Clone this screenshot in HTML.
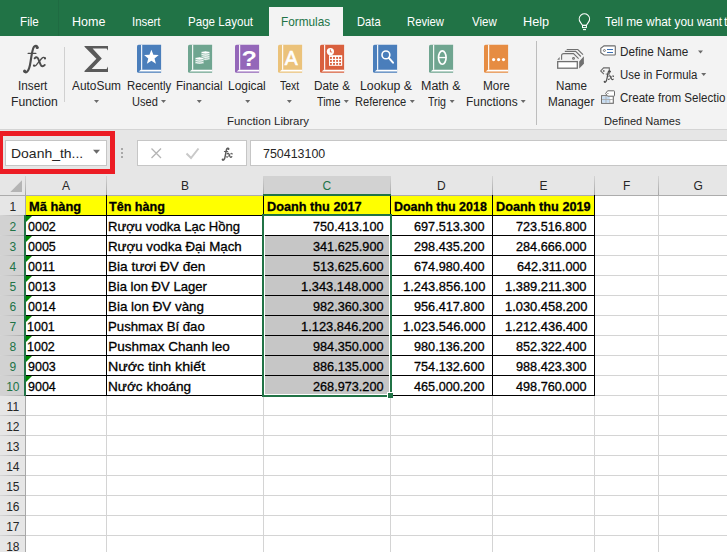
<!DOCTYPE html>
<html><head><meta charset="utf-8">
<style>
html,body{margin:0;padding:0;width:727px;height:552px;overflow:hidden;background:#fff}
body{position:relative;font-family:"Liberation Sans",sans-serif}
.a{position:absolute}
.t{position:absolute;white-space:nowrap;line-height:1;transform-origin:0 0;font-family:"Liberation Sans",sans-serif}
svg{position:absolute;left:0;top:0;overflow:visible}
</style></head><body>
<!-- tab bar -->
<div class="a" style="left:0;top:0;width:727px;height:36px;background:#217346"></div>
<div class="a" style="left:58px;top:0;width:1px;height:36px;background:#1f6b42"></div>
<div class="a" style="left:269px;top:7px;width:74px;height:29px;background:#f3f3f3"></div>
<!-- ribbon -->
<div class="a" style="left:0;top:36px;width:727px;height:93px;background:#f3f3f3"></div>
<div class="a" style="left:0;top:129px;width:727px;height:1px;background:#d4d4d4"></div>
<div class="a" style="left:64px;top:47px;width:1px;height:55px;background:#d0d0d0"></div>
<div class="a" style="left:536px;top:41px;width:1px;height:84px;background:#bdbdbd"></div>
<!-- formula bar area -->
<div class="a" style="left:0;top:130px;width:727px;height:46px;background:#e6e6e6"></div>
<div class="a" style="left:5px;top:140px;width:100px;height:24px;background:#fff;border:1px solid #c6c6c6"></div>
<div class="a" style="left:137px;top:140px;width:108px;height:24px;background:#fff;border:1px solid #c6c6c6"></div>
<div class="a" style="left:250px;top:140px;width:500px;height:24px;background:#fff;border:1px solid #c6c6c6"></div>
<!-- red highlight box -->
<div class="a" style="left:-2px;top:131px;width:107px;height:33px;border:5px solid #ec1c24"></div>
<!-- column header row -->
<div class="a" style="left:0;top:176px;width:727px;height:19px;background:#e6e6e6"></div>
<div class="a" style="left:264px;top:176px;width:126px;height:18px;background:#d2d2d2"></div>
<div class="a" style="left:0;top:195px;width:727px;height:1px;background:#acacac"></div>
<div class="a" style="left:263px;top:194px;width:128px;height:2px;background:#217346"></div>
<!-- row headers -->
<div class="a" style="left:0;top:196px;width:25px;height:356px;background:#e6e6e6"></div>
<div class="a" style="left:0;top:216px;width:24px;height:179px;background:#d2d2d2"></div>
<div class="a" style="left:106px;top:196px;width:1px;height:356px;background:#d4d4d4"></div>
<div class="a" style="left:263px;top:196px;width:1px;height:356px;background:#d4d4d4"></div>
<div class="a" style="left:390px;top:196px;width:1px;height:356px;background:#d4d4d4"></div>
<div class="a" style="left:492px;top:196px;width:1px;height:356px;background:#d4d4d4"></div>
<div class="a" style="left:594px;top:196px;width:1px;height:356px;background:#d4d4d4"></div>
<div class="a" style="left:658px;top:196px;width:1px;height:356px;background:#d4d4d4"></div>
<div class="a" style="left:26px;top:215px;width:701px;height:1px;background:#d4d4d4"></div>
<div class="a" style="left:26px;top:235px;width:701px;height:1px;background:#d4d4d4"></div>
<div class="a" style="left:26px;top:255px;width:701px;height:1px;background:#d4d4d4"></div>
<div class="a" style="left:26px;top:275px;width:701px;height:1px;background:#d4d4d4"></div>
<div class="a" style="left:26px;top:295px;width:701px;height:1px;background:#d4d4d4"></div>
<div class="a" style="left:26px;top:315px;width:701px;height:1px;background:#d4d4d4"></div>
<div class="a" style="left:26px;top:335px;width:701px;height:1px;background:#d4d4d4"></div>
<div class="a" style="left:26px;top:355px;width:701px;height:1px;background:#d4d4d4"></div>
<div class="a" style="left:26px;top:375px;width:701px;height:1px;background:#d4d4d4"></div>
<div class="a" style="left:26px;top:395px;width:701px;height:1px;background:#d4d4d4"></div>
<div class="a" style="left:26px;top:415px;width:701px;height:1px;background:#d4d4d4"></div>
<div class="a" style="left:26px;top:435px;width:701px;height:1px;background:#d4d4d4"></div>
<div class="a" style="left:26px;top:455px;width:701px;height:1px;background:#d4d4d4"></div>
<div class="a" style="left:26px;top:475px;width:701px;height:1px;background:#d4d4d4"></div>
<div class="a" style="left:26px;top:495px;width:701px;height:1px;background:#d4d4d4"></div>
<div class="a" style="left:26px;top:515px;width:701px;height:1px;background:#d4d4d4"></div>
<div class="a" style="left:26px;top:535px;width:701px;height:1px;background:#d4d4d4"></div>
<div class="a" style="left:25px;top:176px;width:1px;height:19px;background:linear-gradient(#d4d4d4,#a6a6a6)"></div>
<div class="a" style="left:106px;top:176px;width:1px;height:19px;background:linear-gradient(#d4d4d4,#a6a6a6)"></div>
<div class="a" style="left:263px;top:176px;width:1px;height:19px;background:linear-gradient(#d4d4d4,#a6a6a6)"></div>
<div class="a" style="left:390px;top:176px;width:1px;height:19px;background:linear-gradient(#d4d4d4,#a6a6a6)"></div>
<div class="a" style="left:492px;top:176px;width:1px;height:19px;background:linear-gradient(#d4d4d4,#a6a6a6)"></div>
<div class="a" style="left:594px;top:176px;width:1px;height:19px;background:linear-gradient(#d4d4d4,#a6a6a6)"></div>
<div class="a" style="left:658px;top:176px;width:1px;height:19px;background:linear-gradient(#d4d4d4,#a6a6a6)"></div>
<div class="a" style="left:0px;top:215px;width:25px;height:1px;background:linear-gradient(to right,#d6d6d6,#a8a8a8)"></div>
<div class="a" style="left:0px;top:235px;width:25px;height:1px;background:linear-gradient(to right,#d6d6d6,#a8a8a8)"></div>
<div class="a" style="left:0px;top:255px;width:25px;height:1px;background:linear-gradient(to right,#d6d6d6,#a8a8a8)"></div>
<div class="a" style="left:0px;top:275px;width:25px;height:1px;background:linear-gradient(to right,#d6d6d6,#a8a8a8)"></div>
<div class="a" style="left:0px;top:295px;width:25px;height:1px;background:linear-gradient(to right,#d6d6d6,#a8a8a8)"></div>
<div class="a" style="left:0px;top:315px;width:25px;height:1px;background:linear-gradient(to right,#d6d6d6,#a8a8a8)"></div>
<div class="a" style="left:0px;top:335px;width:25px;height:1px;background:linear-gradient(to right,#d6d6d6,#a8a8a8)"></div>
<div class="a" style="left:0px;top:355px;width:25px;height:1px;background:linear-gradient(to right,#d6d6d6,#a8a8a8)"></div>
<div class="a" style="left:0px;top:375px;width:25px;height:1px;background:linear-gradient(to right,#d6d6d6,#a8a8a8)"></div>
<div class="a" style="left:0px;top:395px;width:25px;height:1px;background:linear-gradient(to right,#d6d6d6,#a8a8a8)"></div>
<div class="a" style="left:0px;top:415px;width:25px;height:1px;background:linear-gradient(to right,#d6d6d6,#a8a8a8)"></div>
<div class="a" style="left:0px;top:435px;width:25px;height:1px;background:linear-gradient(to right,#d6d6d6,#a8a8a8)"></div>
<div class="a" style="left:0px;top:455px;width:25px;height:1px;background:linear-gradient(to right,#d6d6d6,#a8a8a8)"></div>
<div class="a" style="left:0px;top:475px;width:25px;height:1px;background:linear-gradient(to right,#d6d6d6,#a8a8a8)"></div>
<div class="a" style="left:0px;top:495px;width:25px;height:1px;background:linear-gradient(to right,#d6d6d6,#a8a8a8)"></div>
<div class="a" style="left:0px;top:515px;width:25px;height:1px;background:linear-gradient(to right,#d6d6d6,#a8a8a8)"></div>
<div class="a" style="left:0px;top:535px;width:25px;height:1px;background:linear-gradient(to right,#d6d6d6,#a8a8a8)"></div>
<div class="a" style="left:25px;top:196px;width:1px;height:356px;background:#a8a8a8"></div>
<div class="a" style="left:26px;top:196px;width:568px;height:19px;background:#ffff00"></div>
<div class="a" style="left:265px;top:236px;width:124px;height:158px;background:#c6c6c6"></div>
<div class="a" style="left:106px;top:195px;width:1px;height:201px;background:#000"></div>
<div class="a" style="left:263px;top:195px;width:1px;height:201px;background:#000"></div>
<div class="a" style="left:390px;top:195px;width:1px;height:201px;background:#000"></div>
<div class="a" style="left:492px;top:195px;width:1px;height:201px;background:#000"></div>
<div class="a" style="left:594px;top:195px;width:1px;height:201px;background:#000"></div>
<div class="a" style="left:25px;top:215px;width:570px;height:1px;background:#000"></div>
<div class="a" style="left:25px;top:235px;width:570px;height:1px;background:#000"></div>
<div class="a" style="left:25px;top:255px;width:570px;height:1px;background:#000"></div>
<div class="a" style="left:25px;top:275px;width:570px;height:1px;background:#000"></div>
<div class="a" style="left:25px;top:295px;width:570px;height:1px;background:#000"></div>
<div class="a" style="left:25px;top:315px;width:570px;height:1px;background:#000"></div>
<div class="a" style="left:25px;top:335px;width:570px;height:1px;background:#000"></div>
<div class="a" style="left:25px;top:355px;width:570px;height:1px;background:#000"></div>
<div class="a" style="left:25px;top:375px;width:570px;height:1px;background:#000"></div>
<div class="a" style="left:25px;top:395px;width:570px;height:1px;background:#000"></div>
<div class="a" style="left:264px;top:216px;width:1px;height:179px;background:#fff"></div>
<div class="a" style="left:389px;top:216px;width:1px;height:179px;background:#fff"></div>
<div class="a" style="left:264px;top:394px;width:126px;height:1px;background:#fff"></div>
<div class="a" style="left:262px;top:214px;width:130px;height:2px;background:#217346"></div>
<div class="a" style="left:262px;top:395px;width:125px;height:2px;background:#217346"></div>
<div class="a" style="left:262px;top:214px;width:2px;height:183px;background:#217346"></div>
<div class="a" style="left:390px;top:214px;width:2px;height:178px;background:#217346"></div>
<div class="a" style="left:387px;top:392px;width:6px;height:6px;background:#fff"></div>
<div class="a" style="left:388px;top:393px;width:5px;height:5px;background:#217346"></div>
<div class="a" style="left:24px;top:215px;width:2px;height:181px;background:#217346"></div>
<div class="a" style="left:263px;top:194px;width:128px;height:2px;background:#217346"></div>
<svg width="727" height="552"><path d="M26 216H32L26 222Z" fill="#008a00"/><path d="M26 236H32L26 242Z" fill="#008a00"/><path d="M26 256H32L26 262Z" fill="#008a00"/><path d="M26 276H32L26 282Z" fill="#008a00"/><path d="M26 296H32L26 302Z" fill="#008a00"/><path d="M26 316H32L26 322Z" fill="#008a00"/><path d="M26 336H32L26 342Z" fill="#008a00"/><path d="M26 356H32L26 362Z" fill="#008a00"/><path d="M26 376H32L26 382Z" fill="#008a00"/><path d="M10.3 192H22V180.2Z" fill="#b4b4b4"/></svg>
<svg width="727" height="552" viewBox="0 0 727 552">
<g transform="translate(0,0) scale(1)"><g fill="none" stroke="#4d4d4d" stroke-linecap="round"><path d="M37.6 47.6C37.2 45.6 35.1 45.2 33.9 46.9C32.6 48.7 31.4 56 30.6 61.5C29.8 67 28.8 70.6 26.9 71.9C25.9 72.6 24.6 72.4 24.3 71.5" stroke-width="2.1"/><path d="M28.2 53.4H35.8" stroke-width="1.4"/><path d="M34.6 58.3C36.3 56.3 37.8 57.2 38.6 59.6L40.6 64.6C41.5 66.8 43.2 66.8 44.8 64.9" stroke-width="1.9"/><path d="M45.3 58.3C44 56.7 42.7 57.2 41.2 59L36.6 64.7C35.6 66 34.5 66.3 33.9 65.5" stroke-width="1.3"/></g><circle cx="37.1" cy="47.6" r="1.5" fill="#4d4d4d"/><circle cx="24.6" cy="71.1" r="1.5" fill="#4d4d4d"/><circle cx="45" cy="58.4" r="1.1" fill="#4d4d4d"/><circle cx="34" cy="65.6" r="1.1" fill="#4d4d4d"/></g>
<path d="M84.5 46H108V50.5L106.6 48.6H92.6L101.8 58.6L91.7 68.9H106.6L108 66.6V72H84.5V70.9L96.4 58.8L84.5 46.7Z" fill="#5a5a5a"/>
<g transform="translate(137,44.8)"><path d="M1.6 0H24.1V28H1.6Q0 28 0 26.4V1.6Q0 0 1.6 0Z" fill="#4a7ebb"/><rect x="4.1" y="0" width="1.1" height="25" fill="#fff"/><path d="M3.8 24.9H24.1V26.8H1.7Z" fill="#fff"/><polygon points="14.40,4.90 16.34,9.93 21.72,10.22 17.54,13.62 18.93,18.83 14.40,15.90 9.87,18.83 11.26,13.62 7.08,10.22 12.46,9.93" fill="#fff"/></g>
<g transform="translate(188,44.8)"><path d="M1.6 0H24.1V28H1.6Q0 28 0 26.4V1.6Q0 0 1.6 0Z" fill="#6fa590"/><rect x="4.1" y="0" width="1.1" height="25" fill="#fff"/><path d="M3.8 24.9H24.1V26.8H1.7Z" fill="#fff"/><ellipse cx="17.5" cy="13.8" rx="4.4" ry="1.6" fill="#fff" stroke="#6fa590" stroke-width="0.7"/><ellipse cx="17.5" cy="11.9" rx="4.4" ry="1.6" fill="#fff" stroke="#6fa590" stroke-width="0.7"/><ellipse cx="17.5" cy="9.8" rx="4.4" ry="1.6" fill="#fff" stroke="#6fa590" stroke-width="0.7"/><ellipse cx="17.5" cy="7.7" rx="4.4" ry="1.6" fill="#fff" stroke="#6fa590" stroke-width="0.7"/><ellipse cx="11.5" cy="17.7" rx="4.4" ry="1.6" fill="#fff" stroke="#6fa590" stroke-width="0.7"/><ellipse cx="11.5" cy="15.7" rx="4.4" ry="1.6" fill="#fff" stroke="#6fa590" stroke-width="0.7"/><ellipse cx="11.5" cy="13.7" rx="4.4" ry="1.6" fill="#fff" stroke="#6fa590" stroke-width="0.7"/></g>
<g transform="translate(235,44.8)"><path d="M1.6 0H24.1V28H1.6Q0 28 0 26.4V1.6Q0 0 1.6 0Z" fill="#9467b9"/><rect x="4.1" y="0" width="1.1" height="25" fill="#fff"/><path d="M3.8 24.9H24.1V26.8H1.7Z" fill="#fff"/><text x="14.1" y="20.9" text-anchor="middle" font-family="Liberation Sans" font-weight="bold" font-size="22.5" fill="#fff" transform="translate(14.1 0) scale(1.12 1) translate(-14.1 0)">?</text></g>
<g transform="translate(278,44.8)"><path d="M1.6 0H24.1V28H1.6Q0 28 0 26.4V1.6Q0 0 1.6 0Z" fill="#ebc27a"/><rect x="4.1" y="0" width="1.1" height="25" fill="#fff"/><path d="M3.8 24.9H24.1V26.8H1.7Z" fill="#fff"/><text x="13.2" y="20" text-anchor="middle" font-family="Liberation Sans" font-size="19.5" fill="#fff" stroke="#fff" stroke-width="0.6">A</text></g>
<g transform="translate(320,44.8)"><path d="M1.6 0H24.1V28H1.6Q0 28 0 26.4V1.6Q0 0 1.6 0Z" fill="#d9603e"/><rect x="4.1" y="0" width="1.1" height="25" fill="#fff"/><path d="M3.8 24.9H24.1V26.8H1.7Z" fill="#fff"/><circle cx="10.4" cy="6.8" r="3.6" fill="#fff"/><path d="M10.4 4.6V7.2H12.2" stroke="#d9603e" stroke-width="0.9" fill="none"/><rect x="9" y="10.4" width="13.2" height="10.6" fill="#fff"/><rect x="9.95" y="12.15" width="1.9" height="1.9" fill="#d9603e"/><rect x="9.95" y="15.15" width="1.9" height="1.9" fill="#d9603e"/><rect x="9.95" y="18.15" width="1.9" height="1.9" fill="#d9603e"/><rect x="13.05" y="12.15" width="1.9" height="1.9" fill="#d9603e"/><rect x="13.05" y="15.15" width="1.9" height="1.9" fill="#d9603e"/><rect x="13.05" y="18.15" width="1.9" height="1.9" fill="#d9603e"/><rect x="16.15" y="12.15" width="1.9" height="1.9" fill="#d9603e"/><rect x="16.15" y="15.15" width="1.9" height="1.9" fill="#d9603e"/><rect x="16.15" y="18.15" width="1.9" height="1.9" fill="#d9603e"/><rect x="19.15" y="12.15" width="1.9" height="1.9" fill="#d9603e"/><rect x="19.15" y="15.15" width="1.9" height="1.9" fill="#d9603e"/><rect x="19.15" y="18.15" width="1.9" height="1.9" fill="#d9603e"/></g>
<g transform="translate(373,44.8)"><path d="M1.6 0H24.1V28H1.6Q0 28 0 26.4V1.6Q0 0 1.6 0Z" fill="#4a7ebb"/><rect x="4.1" y="0" width="1.1" height="25" fill="#fff"/><path d="M3.8 24.9H24.1V26.8H1.7Z" fill="#fff"/><circle cx="12.9" cy="10.1" r="3.9" fill="none" stroke="#fff" stroke-width="1.6"/><path d="M15.8 13.1L20 17.9" stroke="#fff" stroke-width="2" stroke-linecap="round"/></g>
<g transform="translate(429,44.8)"><path d="M1.6 0H24.1V28H1.6Q0 28 0 26.4V1.6Q0 0 1.6 0Z" fill="#6fa590"/><rect x="4.1" y="0" width="1.1" height="25" fill="#fff"/><path d="M3.8 24.9H24.1V26.8H1.7Z" fill="#fff"/><ellipse cx="13.3" cy="12.75" rx="3.8" ry="6.7" fill="none" stroke="#fff" stroke-width="1.7"/><rect x="9.6" y="12.1" width="7.4" height="1.3" fill="#fff"/></g>
<g transform="translate(484,44.8)"><path d="M1.6 0H24.1V28H1.6Q0 28 0 26.4V1.6Q0 0 1.6 0Z" fill="#e68c42"/><rect x="4.1" y="0" width="1.1" height="25" fill="#fff"/><path d="M3.8 24.9H24.1V26.8H1.7Z" fill="#fff"/><circle cx="9.6" cy="14.8" r="1.6" fill="#fff"/><circle cx="14.6" cy="14.8" r="1.6" fill="#fff"/><circle cx="19.5" cy="14.8" r="1.6" fill="#fff"/></g>
<path d="M94.0 100.0H99.0L96.5 103.0Z" fill="#6a6a6a"/>
<path d="M161.0 100.0H166.0L163.5 103.0Z" fill="#6a6a6a"/>
<path d="M196.8 100.0H201.8L199.3 103.0Z" fill="#6a6a6a"/>
<path d="M245.2 100.0H250.2L247.7 103.0Z" fill="#6a6a6a"/>
<path d="M286.9 100.0H291.9L289.4 103.0Z" fill="#6a6a6a"/>
<path d="M343.8 100.0H348.8L346.3 103.0Z" fill="#6a6a6a"/>
<path d="M409.8 100.0H414.8L412.3 103.0Z" fill="#6a6a6a"/>
<path d="M449.6 100.0H454.6L452.1 103.0Z" fill="#6a6a6a"/>
<path d="M520.7 100.0H525.7L523.2 103.0Z" fill="#6a6a6a"/>
<path d="M698.0 50.5H703.0L700.5 53.5Z" fill="#6a6a6a"/>
<path d="M701.2 73.1H706.2L703.7 76.1Z" fill="#6a6a6a"/>
<path d="M93.0 149.8H100.0L96.5 153.8Z" fill="#6a6a6a"/>
<g fill="none" stroke="#707070" stroke-width="1.1"><path d="M561.6 59.8V55.6Q561.6 53.6 563.8 53.6H573.5L578.6 58.7"/><path d="M564.8 51.4H575.6L580.8 56.5"/><path d="M566.7 49.5H577.8L583 54.6"/><circle cx="573.5" cy="58.4" r="0.9"/><rect x="557.7" y="61.6" width="19.6" height="6.6" fill="#fff" stroke-width="1.3"/></g><path d="M579.2 61.4L583.9 56.2V63.8L579.2 68.6Z" fill="#707070"/><path d="M557.2 59.8L559.6 57V59.8Z" fill="#707070"/>
<path d="M604 45.9H614.6Q615.3 45.9 615.3 46.6V54.3Q615.3 55 614.6 55H604L600.8 52.6V48.3Z" fill="#fff" stroke="#6b6b6b" stroke-width="1.1"/><circle cx="604.4" cy="50.5" r="1" fill="none" stroke="#6b6b6b" stroke-width="0.9"/><path d="M607 49.5H613M607 52.5H613" stroke="#3c70b5" stroke-width="1.1"/>
<path d="M609.3 73.8V67.9H603.6L600.7 70.9L603.9 74.1" fill="none" stroke="#6b6b6b" stroke-width="1.1"/><circle cx="603.8" cy="71" r="0.9" fill="#6b6b6b"/>
<g transform="translate(594.01,51.142) scale(0.43)"><g fill="none" stroke="#4d4d4d" stroke-linecap="round"><path d="M37.6 47.6C37.2 45.6 35.1 45.2 33.9 46.9C32.6 48.7 31.4 56 30.6 61.5C29.8 67 28.8 70.6 26.9 71.9C25.9 72.6 24.6 72.4 24.3 71.5" stroke-width="2.8350000000000004"/><path d="M28.2 53.4H35.8" stroke-width="1.89"/><path d="M34.6 58.3C36.3 56.3 37.8 57.2 38.6 59.6L40.6 64.6C41.5 66.8 43.2 66.8 44.8 64.9" stroke-width="2.565"/><path d="M45.3 58.3C44 56.7 42.7 57.2 41.2 59L36.6 64.7C35.6 66 34.5 66.3 33.9 65.5" stroke-width="1.7550000000000001"/></g><circle cx="37.1" cy="47.6" r="2.0250000000000004" fill="#4d4d4d"/><circle cx="24.6" cy="71.1" r="2.0250000000000004" fill="#4d4d4d"/><circle cx="45" cy="58.4" r="1.4850000000000003" fill="#4d4d4d"/><circle cx="34" cy="65.6" r="1.4850000000000003" fill="#4d4d4d"/></g>
<rect x="601.6" y="95.7" width="11.7" height="7.6" fill="#fff" stroke="#6b6b6b" stroke-width="1.1"/><rect x="602.3" y="96.4" width="7.4" height="6.3" fill="#c5dcf2"/><path d="M602 99.5H613M606 96V103M609.8 99V103" stroke="#a9a9a9" stroke-width="0.8"/><path d="M607.6 90.8H613.9Q614.5 90.8 614.5 91.4V95.6Q614.5 96.2 613.9 96.2H607.6L605.6 93.5Z" fill="#fff" stroke="#6b6b6b" stroke-width="1"/><circle cx="607.9" cy="93.5" r="0.6" fill="#6b6b6b"/>
<path d="M151.5 148.5L161 158M161 148.5L151.5 158" stroke="#b4b4b4" stroke-width="1.3"/>
<path d="M186.5 153.5L191 158L198.5 148.5" fill="none" stroke="#c9c9c9" stroke-width="2"/>
<g transform="translate(211.65,127.49300000000001) scale(0.45)"><g fill="none" stroke="#5a5a5a" stroke-linecap="round"><path d="M37.6 47.6C37.2 45.6 35.1 45.2 33.9 46.9C32.6 48.7 31.4 56 30.6 61.5C29.8 67 28.8 70.6 26.9 71.9C25.9 72.6 24.6 72.4 24.3 71.5" stroke-width="3.2550000000000003"/><path d="M28.2 53.4H35.8" stroke-width="2.17"/><path d="M34.6 58.3C36.3 56.3 37.8 57.2 38.6 59.6L40.6 64.6C41.5 66.8 43.2 66.8 44.8 64.9" stroke-width="2.945"/><path d="M45.3 58.3C44 56.7 42.7 57.2 41.2 59L36.6 64.7C35.6 66 34.5 66.3 33.9 65.5" stroke-width="2.015"/></g><circle cx="37.1" cy="47.6" r="2.325" fill="#5a5a5a"/><circle cx="24.6" cy="71.1" r="2.325" fill="#5a5a5a"/><circle cx="45" cy="58.4" r="1.7050000000000003" fill="#5a5a5a"/><circle cx="34" cy="65.6" r="1.7050000000000003" fill="#5a5a5a"/></g>
<rect x="121" y="148" width="2" height="2" fill="#a8a8a8"/>
<rect x="121" y="152" width="2" height="2" fill="#a8a8a8"/>
<rect x="121" y="156" width="2" height="2" fill="#a8a8a8"/>
<path d="M582.4 25.2L580.3 22.1A5.15 5.15 0 1 1 588.5 22.1L586.4 25.2Z" fill="none" stroke="#fff" stroke-width="1.1" stroke-linejoin="round"/><rect x="582.5" y="25.4" width="3.9" height="2.2" fill="none" stroke="#fff" stroke-width="1"/><path d="M583 29.6H586" stroke="#fff" stroke-width="1.1"/>
</svg>
<div class="t" style="left:19.70px;top:15.00px;font-size:13px;color:#ffffff;transform:scaleX(0.8977)">File</div>
<div class="t" style="left:72.44px;top:15.00px;font-size:13px;color:#ffffff;transform:scaleX(0.9627)">Home</div>
<div class="t" style="left:132.32px;top:15.00px;font-size:13px;color:#ffffff;transform:scaleX(0.8777)">Insert</div>
<div class="t" style="left:188.11px;top:15.00px;font-size:13px;color:#ffffff;transform:scaleX(0.8910)">Page Layout</div>
<div class="t" style="left:280.59px;top:15.00px;font-size:13px;color:#217346;transform:scaleX(0.9073)">Formulas</div>
<div class="t" style="left:356.54px;top:15.00px;font-size:13px;color:#ffffff;transform:scaleX(0.8593)">Data</div>
<div class="t" style="left:407.43px;top:15.00px;font-size:13px;color:#ffffff;transform:scaleX(0.8666)">Review</div>
<div class="t" style="left:471.90px;top:15.00px;font-size:13px;color:#ffffff;transform:scaleX(0.8860)">View</div>
<div class="t" style="left:523.12px;top:15.00px;font-size:13px;color:#ffffff;transform:scaleX(0.9762)">Help</div>
<div class="t" style="left:604.80px;top:15.00px;font-size:13px;color:#ffffff;transform:scaleX(0.9160)">Tell me what you want</div>
<div class="t" style="left:724.30px;top:15.00px;font-size:13px;color:#ffffff;transform:scaleX(0.9500)">to do</div>
<div class="t" style="left:18.02px;top:79.85px;font-size:12px;color:#262626;transform:scaleX(0.9772)">Insert</div>
<div class="t" style="left:10.50px;top:96.15px;font-size:12px;color:#262626;transform:scaleX(1.0143)">Function</div>
<div class="t" style="left:71.50px;top:79.85px;font-size:12px;color:#262626;transform:scaleX(0.9906)">AutoSum</div>
<div class="t" style="left:126.60px;top:79.85px;font-size:12px;color:#262626;transform:scaleX(0.9467)">Recently</div>
<div class="t" style="left:132.40px;top:96.15px;font-size:12px;color:#262626;transform:scaleX(0.9217)">Used</div>
<div class="t" style="left:176.40px;top:79.85px;font-size:12px;color:#262626;transform:scaleX(0.9692)">Financial</div>
<div class="t" style="left:228.30px;top:79.85px;font-size:12px;color:#262626;transform:scaleX(0.9930)">Logical</div>
<div class="t" style="left:279.80px;top:79.85px;font-size:12px;color:#262626;transform:scaleX(0.8733)">Text</div>
<div class="t" style="left:313.60px;top:79.85px;font-size:12px;color:#262626;transform:scaleX(0.9814)">Date &amp;</div>
<div class="t" style="left:316.60px;top:96.15px;font-size:12px;color:#262626;transform:scaleX(0.9003)">Time</div>
<div class="t" style="left:359.50px;top:79.85px;font-size:12px;color:#262626;transform:scaleX(1.0256)">Lookup &amp;</div>
<div class="t" style="left:355.40px;top:96.15px;font-size:12px;color:#262626;transform:scaleX(0.9265)">Reference</div>
<div class="t" style="left:420.70px;top:79.85px;font-size:12px;color:#262626;transform:scaleX(1.0418)">Math &amp;</div>
<div class="t" style="left:428.20px;top:96.15px;font-size:12px;color:#262626;transform:scaleX(0.8851)">Trig</div>
<div class="t" style="left:482.60px;top:79.85px;font-size:12px;color:#262626;transform:scaleX(0.9832)">More</div>
<div class="t" style="left:466.40px;top:96.15px;font-size:12px;color:#262626;transform:scaleX(0.9918)">Functions</div>
<div class="t" style="left:555.50px;top:79.85px;font-size:12px;color:#262626;transform:scaleX(0.9680)">Name</div>
<div class="t" style="left:547.70px;top:96.15px;font-size:12px;color:#262626;transform:scaleX(0.9775)">Manager</div>
<div class="t" style="left:619.60px;top:45.65px;font-size:12px;color:#262626;transform:scaleX(0.9750)">Define Name</div>
<div class="t" style="left:619.60px;top:68.85px;font-size:12px;color:#262626;transform:scaleX(0.9512)">Use in Formula</div>
<div class="t" style="left:619.60px;top:91.85px;font-size:12px;color:#262626;transform:scaleX(0.9635)">Create from Selectio</div>
<div class="t" style="left:226.60px;top:115.99px;font-size:11px;color:#262626;transform:scaleX(1.0394)">Function Library</div>
<div class="t" style="left:603.60px;top:116.09px;font-size:11px;color:#262626;transform:scaleX(1.0090)">Defined Names</div>
<div class="t" style="left:11.43px;top:146.60px;font-size:13px;color:#262626;transform:scaleX(1.0746)">Doanh_th...</div>
<div class="t" style="left:262.50px;top:147.00px;font-size:13px;color:#262626;transform:scaleX(0.9562)">750413100</div>
<div class="t" style="left:62.00px;top:179.85px;font-size:12px;color:#262626">A</div>
<div class="t" style="left:181.00px;top:179.85px;font-size:12px;color:#262626">B</div>
<div class="t" style="left:322.50px;top:179.85px;font-size:12px;color:#217346">C</div>
<div class="t" style="left:437.00px;top:179.85px;font-size:12px;color:#262626">D</div>
<div class="t" style="left:539.50px;top:179.85px;font-size:12px;color:#262626">E</div>
<div class="t" style="left:623.00px;top:179.85px;font-size:12px;color:#262626">F</div>
<div class="t" style="left:693.50px;top:179.85px;font-size:12px;color:#262626">G</div>
<div class="t" style="left:9.50px;top:201.25px;font-size:12px;color:#262626">1</div>
<div class="t" style="left:9.50px;top:221.25px;font-size:12px;color:#217346">2</div>
<div class="t" style="left:9.50px;top:241.25px;font-size:12px;color:#217346">3</div>
<div class="t" style="left:9.50px;top:261.25px;font-size:12px;color:#217346">4</div>
<div class="t" style="left:9.50px;top:281.25px;font-size:12px;color:#217346">5</div>
<div class="t" style="left:9.50px;top:301.25px;font-size:12px;color:#217346">6</div>
<div class="t" style="left:9.50px;top:321.25px;font-size:12px;color:#217346">7</div>
<div class="t" style="left:9.50px;top:341.25px;font-size:12px;color:#217346">8</div>
<div class="t" style="left:9.50px;top:361.25px;font-size:12px;color:#217346">9</div>
<div class="t" style="left:6.16px;top:381.25px;font-size:12px;color:#217346">10</div>
<div class="t" style="left:6.61px;top:401.25px;font-size:12px;color:#262626">11</div>
<div class="t" style="left:6.16px;top:421.25px;font-size:12px;color:#262626">12</div>
<div class="t" style="left:6.16px;top:441.25px;font-size:12px;color:#262626">13</div>
<div class="t" style="left:6.16px;top:461.25px;font-size:12px;color:#262626">14</div>
<div class="t" style="left:6.16px;top:481.25px;font-size:12px;color:#262626">15</div>
<div class="t" style="left:6.16px;top:501.25px;font-size:12px;color:#262626">16</div>
<div class="t" style="left:6.16px;top:521.25px;font-size:12px;color:#262626">17</div>
<div class="t" style="left:6.16px;top:541.25px;font-size:12px;color:#262626">18</div>
<div class="t" style="left:28.90px;top:199.88px;font-size:13.5px;color:#000000;font-weight:bold;transform:scaleX(0.9522);-webkit-text-stroke:0.3px #000000">Mã hàng</div>
<div class="t" style="left:109.00px;top:199.88px;font-size:13.5px;color:#000000;font-weight:bold;transform:scaleX(0.9322);-webkit-text-stroke:0.3px #000000">Tên hàng</div>
<div class="t" style="left:266.50px;top:199.88px;font-size:13.5px;color:#000000;font-weight:bold;transform:scaleX(0.9419);-webkit-text-stroke:0.3px #000000">Doanh thu 2017</div>
<div class="t" style="left:394.00px;top:199.88px;font-size:13.5px;color:#000000;font-weight:bold;transform:scaleX(0.9237);-webkit-text-stroke:0.3px #000000">Doanh thu 2018</div>
<div class="t" style="left:495.70px;top:199.88px;font-size:13.5px;color:#000000;font-weight:bold;transform:scaleX(0.9419);-webkit-text-stroke:0.3px #000000">Doanh thu 2019</div>
<div class="t" style="left:28.30px;top:220.08px;font-size:13.5px;color:#000000;transform:scaleX(0.9247);-webkit-text-stroke:0.3px #000000">0002</div>
<div class="t" style="left:108.33px;top:220.08px;font-size:13.5px;color:#000000;transform:scaleX(0.9677);-webkit-text-stroke:0.3px #000000">Rượu vodka Lạc Hồng</div>
<div class="t" style="left:312.80px;top:220.08px;font-size:13.5px;color:#000000;transform:scaleX(0.9388);-webkit-text-stroke:0.3px #000000">750.413.100</div>
<div class="t" style="left:414.45px;top:220.08px;font-size:13.5px;color:#000000;transform:scaleX(0.9388);-webkit-text-stroke:0.3px #000000">697.513.300</div>
<div class="t" style="left:516.45px;top:220.08px;font-size:13.5px;color:#000000;transform:scaleX(0.9388);-webkit-text-stroke:0.3px #000000">723.516.800</div>
<div class="t" style="left:28.30px;top:240.08px;font-size:13.5px;color:#000000;transform:scaleX(0.9247);-webkit-text-stroke:0.3px #000000">0005</div>
<div class="t" style="left:108.31px;top:240.08px;font-size:13.5px;color:#000000;transform:scaleX(0.9852);-webkit-text-stroke:0.3px #000000">Rượu vodka Đại Mạch</div>
<div class="t" style="left:312.80px;top:240.08px;font-size:13.5px;color:#000000;transform:scaleX(0.9388);-webkit-text-stroke:0.3px #000000">341.625.900</div>
<div class="t" style="left:414.45px;top:240.08px;font-size:13.5px;color:#000000;transform:scaleX(0.9388);-webkit-text-stroke:0.3px #000000">298.435.200</div>
<div class="t" style="left:516.45px;top:240.08px;font-size:13.5px;color:#000000;transform:scaleX(0.9388);-webkit-text-stroke:0.3px #000000">284.666.000</div>
<div class="t" style="left:28.30px;top:260.08px;font-size:13.5px;color:#000000;transform:scaleX(0.9247);-webkit-text-stroke:0.3px #000000">0011</div>
<div class="t" style="left:108.29px;top:260.08px;font-size:13.5px;color:#000000;transform:scaleX(1.0076);-webkit-text-stroke:0.3px #000000">Bia tươi ĐV đen</div>
<div class="t" style="left:312.80px;top:260.08px;font-size:13.5px;color:#000000;transform:scaleX(0.9388);-webkit-text-stroke:0.3px #000000">513.625.600</div>
<div class="t" style="left:414.45px;top:260.08px;font-size:13.5px;color:#000000;transform:scaleX(0.9388);-webkit-text-stroke:0.3px #000000">674.980.400</div>
<div class="t" style="left:517.39px;top:260.08px;font-size:13.5px;color:#000000;transform:scaleX(0.9388);-webkit-text-stroke:0.3px #000000">642.311.000</div>
<div class="t" style="left:28.30px;top:280.08px;font-size:13.5px;color:#000000;transform:scaleX(0.9247);-webkit-text-stroke:0.3px #000000">0013</div>
<div class="t" style="left:108.33px;top:280.08px;font-size:13.5px;color:#000000;transform:scaleX(0.9688);-webkit-text-stroke:0.3px #000000">Bia lon ĐV Lager</div>
<div class="t" style="left:300.85px;top:280.08px;font-size:13.5px;color:#000000;transform:scaleX(0.9549);-webkit-text-stroke:0.3px #000000">1.343.148.000</div>
<div class="t" style="left:402.50px;top:280.08px;font-size:13.5px;color:#000000;transform:scaleX(0.9549);-webkit-text-stroke:0.3px #000000">1.243.856.100</div>
<div class="t" style="left:505.45px;top:280.08px;font-size:13.5px;color:#000000;transform:scaleX(0.9549);-webkit-text-stroke:0.3px #000000">1.389.211.300</div>
<div class="t" style="left:28.30px;top:300.08px;font-size:13.5px;color:#000000;transform:scaleX(0.9247);-webkit-text-stroke:0.3px #000000">0014</div>
<div class="t" style="left:108.31px;top:300.08px;font-size:13.5px;color:#000000;transform:scaleX(0.9916);-webkit-text-stroke:0.3px #000000">Bia lon ĐV vàng</div>
<div class="t" style="left:312.80px;top:300.08px;font-size:13.5px;color:#000000;transform:scaleX(0.9388);-webkit-text-stroke:0.3px #000000">982.360.300</div>
<div class="t" style="left:414.45px;top:300.08px;font-size:13.5px;color:#000000;transform:scaleX(0.9388);-webkit-text-stroke:0.3px #000000">956.417.800</div>
<div class="t" style="left:504.50px;top:300.08px;font-size:13.5px;color:#000000;transform:scaleX(0.9549);-webkit-text-stroke:0.3px #000000">1.030.458.200</div>
<div class="t" style="left:27.38px;top:320.08px;font-size:13.5px;color:#000000;transform:scaleX(0.9247);-webkit-text-stroke:0.3px #000000">1001</div>
<div class="t" style="left:108.32px;top:320.08px;font-size:13.5px;color:#000000;transform:scaleX(0.9770);-webkit-text-stroke:0.3px #000000">Pushmax Bí đao</div>
<div class="t" style="left:300.85px;top:320.08px;font-size:13.5px;color:#000000;transform:scaleX(0.9549);-webkit-text-stroke:0.3px #000000">1.123.846.200</div>
<div class="t" style="left:402.50px;top:320.08px;font-size:13.5px;color:#000000;transform:scaleX(0.9549);-webkit-text-stroke:0.3px #000000">1.023.546.000</div>
<div class="t" style="left:504.50px;top:320.08px;font-size:13.5px;color:#000000;transform:scaleX(0.9549);-webkit-text-stroke:0.3px #000000">1.212.436.400</div>
<div class="t" style="left:27.38px;top:340.08px;font-size:13.5px;color:#000000;transform:scaleX(0.9247);-webkit-text-stroke:0.3px #000000">1002</div>
<div class="t" style="left:108.30px;top:340.08px;font-size:13.5px;color:#000000;-webkit-text-stroke:0.3px #000000">Pushmax Chanh leo</div>
<div class="t" style="left:312.80px;top:340.08px;font-size:13.5px;color:#000000;transform:scaleX(0.9388);-webkit-text-stroke:0.3px #000000">984.350.000</div>
<div class="t" style="left:414.45px;top:340.08px;font-size:13.5px;color:#000000;transform:scaleX(0.9388);-webkit-text-stroke:0.3px #000000">980.136.200</div>
<div class="t" style="left:516.45px;top:340.08px;font-size:13.5px;color:#000000;transform:scaleX(0.9388);-webkit-text-stroke:0.3px #000000">852.322.400</div>
<div class="t" style="left:28.30px;top:360.08px;font-size:13.5px;color:#000000;transform:scaleX(0.9247);-webkit-text-stroke:0.3px #000000">9003</div>
<div class="t" style="left:108.25px;top:360.08px;font-size:13.5px;color:#000000;transform:scaleX(1.0534);-webkit-text-stroke:0.3px #000000">Nước tinh khiết</div>
<div class="t" style="left:312.80px;top:360.08px;font-size:13.5px;color:#000000;transform:scaleX(0.9388);-webkit-text-stroke:0.3px #000000">886.135.000</div>
<div class="t" style="left:414.45px;top:360.08px;font-size:13.5px;color:#000000;transform:scaleX(0.9388);-webkit-text-stroke:0.3px #000000">754.132.600</div>
<div class="t" style="left:516.45px;top:360.08px;font-size:13.5px;color:#000000;transform:scaleX(0.9388);-webkit-text-stroke:0.3px #000000">988.423.300</div>
<div class="t" style="left:28.30px;top:380.08px;font-size:13.5px;color:#000000;transform:scaleX(0.9247);-webkit-text-stroke:0.3px #000000">9004</div>
<div class="t" style="left:108.29px;top:380.08px;font-size:13.5px;color:#000000;transform:scaleX(1.0071);-webkit-text-stroke:0.3px #000000">Nước khoáng</div>
<div class="t" style="left:312.80px;top:380.08px;font-size:13.5px;color:#000000;transform:scaleX(0.9388);-webkit-text-stroke:0.3px #000000">268.973.200</div>
<div class="t" style="left:414.45px;top:380.08px;font-size:13.5px;color:#000000;transform:scaleX(0.9388);-webkit-text-stroke:0.3px #000000">465.000.200</div>
<div class="t" style="left:516.45px;top:380.08px;font-size:13.5px;color:#000000;transform:scaleX(0.9388);-webkit-text-stroke:0.3px #000000">498.760.000</div>
</body></html>
